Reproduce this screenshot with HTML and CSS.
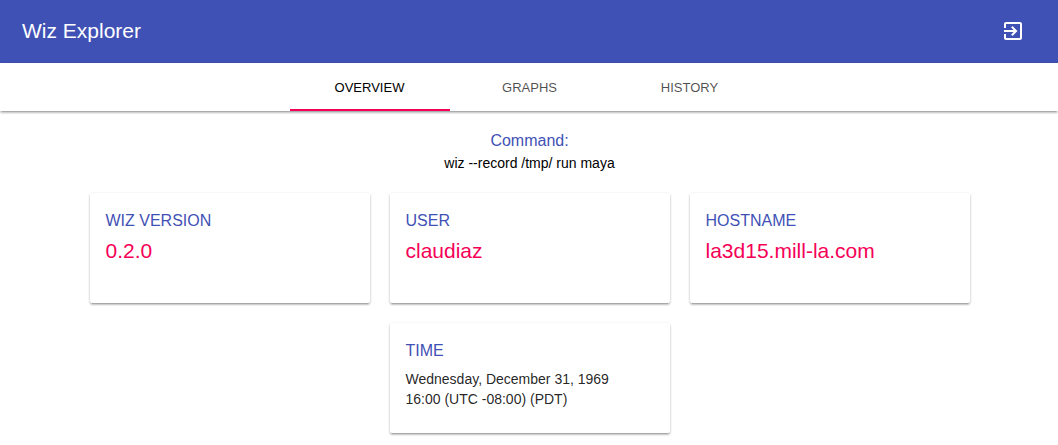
FILE: index.html
```html
<!DOCTYPE html>
<html lang="en">
<head>
<meta charset="utf-8">
<meta name="viewport" content="width=device-width, initial-scale=1">
<title>Wiz Explorer</title>
<link rel="stylesheet" href="styles.css">
</head>
<body>
<header class="app-bar">
  <h1 class="app-title">Wiz Explorer</h1>
  <button class="icon-button" type="button" aria-label="Open session">
    <svg viewBox="0 0 24 24" width="24" height="24" aria-hidden="true"><path fill="currentColor" d="M10.09 15.59L11.5 17l5-5-5-5-1.41 1.41L12.67 11H3v2h9.67l-2.58 2.59zM19 3H5c-1.11 0-2 .9-2 2v4h2V5h14v14H5v-4H3v4c0 1.100.89 2 2 2h14c1.100 0 2-.9 2-2V5c0-1.100-.9-2-2-2z"/></svg>
  </button>
</header>
<div class="tabs" role="tablist">
  <button class="tab tab-selected" type="button" role="tab" aria-selected="true">Overview</button>
  <button class="tab" type="button" role="tab" aria-selected="false">Graphs</button>
  <button class="tab" type="button" role="tab" aria-selected="false">History</button>
</div>
<main class="overview">
  <section class="command">
    <h2 class="command-label">Command:</h2>
    <p class="command-text">wiz --record /tmp/ run maya</p>
  </section>
  <div class="cards">
    <section class="card">
      <h2 class="card-label">WIZ VERSION</h2>
      <p class="card-value">0.2.0</p>
    </section>
    <section class="card">
      <h2 class="card-label">USER</h2>
      <p class="card-value">claudiaz</p>
    </section>
    <section class="card">
      <h2 class="card-label">HOSTNAME</h2>
      <p class="card-value">la3d15.mill-la.com</p>
    </section>
    <section class="card">
      <h2 class="card-label">TIME</h2>
      <p class="card-detail">Wednesday, December 31, 1969<br>16:00 (UTC -08:00) (PDT)</p>
    </section>
  </div>
</main>
</body>
</html>
```

FILE: styles.css
```css
* {
  box-sizing: border-box;
}

body {
  margin: 0;
  background: #fff;
  color: #000;
  font-family: "Liberation Sans", Arial, sans-serif;
}

h1,
h2,
p {
  margin: 0;
  font-weight: 400;
}

.app-bar {
  display: flex;
  align-items: center;
  justify-content: space-between;
  padding: 7px 21px 8px 22px;
  background: #3f51b5;
  color: #fff;
}

.app-title {
  font-size: 21px;
  line-height: 28px;
}

.icon-button {
  display: flex;
  padding: 12px;
  border: 0;
  border-radius: 50%;
  background: none;
  color: inherit;
  cursor: pointer;
}

.tabs {
  display: flex;
  justify-content: center;
  padding-left: 1px;
  background: #fff;
  box-shadow: 0 1px 3px rgba(0, 0, 0, 0.2), 0 2px 2px rgba(0, 0, 0, 0.14), 0 3px 1px -2px rgba(0, 0, 0, 0.12);
}

.tab {
  width: 160px;
  height: 48px;
  padding: 4px 0 0;
  border: 0;
  border-bottom: 2px solid transparent;
  background: none;
  color: rgba(0, 0, 0, 0.7);
  font: 13px/20px "Liberation Sans", Arial, sans-serif;
  text-transform: uppercase;
  cursor: pointer;
}

.tab-selected {
  border-bottom-color: #f50057;
  color: #000;
}

.overview {
  padding: 18px 20px 10px 21px;
}

.command {
  padding-bottom: 20px;
  text-align: center;
}

.command-label {
  color: #3f51b5;
  font-size: 16px;
  line-height: 24px;
}

.command-text {
  font-size: 14px;
  line-height: 20px;
}

.cards {
  display: flex;
  flex-wrap: wrap;
  justify-content: center;
  gap: 20px;
  max-width: 900px;
  margin: 0 auto;
}

.card {
  width: 280px;
  min-height: 110px;
  padding: 16px;
  border-radius: 2px;
  background: #fff;
  box-shadow: 0 1px 3px rgba(0, 0, 0, 0.2), 0 2px 2px rgba(0, 0, 0, 0.14), 0 3px 1px -2px rgba(0, 0, 0, 0.12);
}

.card-label {
  color: #3f51b5;
  font-size: 16px;
  line-height: 24px;
}

.card-value {
  padding-top: 4px;
  color: #f50057;
  font-size: 21px;
  line-height: 28px;
}

.card-detail {
  padding-top: 6px;
  color: rgba(0, 0, 0, 0.87);
  font-size: 14px;
  line-height: 20px;
}
```
